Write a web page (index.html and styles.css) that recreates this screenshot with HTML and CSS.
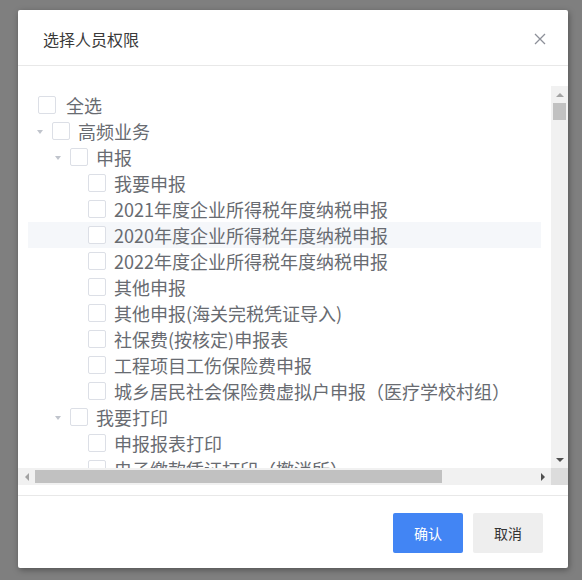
FILE: index.html
```html
<!DOCTYPE html>
<html lang="zh-CN">
<head>
<meta charset="utf-8">
<title>选择人员权限</title>
<link rel="stylesheet" href="styles.css">
</head>
<body class="page">
<div class="modal">
  <div class="modal-header">
    <span class="title">选择人员权限</span>
    <svg class="close" width="12" height="12" viewBox="0 0 12 12"><path d="M1 1 L11 11 M11 1 L1 11" stroke="#8d9099" stroke-width="1.3" fill="none"/></svg>
  </div>
  <div class="modal-body">
    <div class="scroller">
      <div class="viewport">
        <div class="check-all"><span class="cb"></span><span class="label">全选</span></div>
        <div class="tree">
          <div class="node l1"><span class="caret"><i></i></span><span class="cb"></span><span class="label">高频业务</span></div>
          <div class="node l2"><span class="caret"><i></i></span><span class="cb"></span><span class="label">申报</span></div>
          <div class="node l3"><span class="caret"></span><span class="cb"></span><span class="label">我要申报</span></div>
          <div class="node l3"><span class="caret"></span><span class="cb"></span><span class="label">2021年度企业所得税年度纳税申报</span></div>
          <div class="node l3 hover"><span class="caret"></span><span class="cb"></span><span class="label">2020年度企业所得税年度纳税申报</span></div>
          <div class="node l3"><span class="caret"></span><span class="cb"></span><span class="label">2022年度企业所得税年度纳税申报</span></div>
          <div class="node l3"><span class="caret"></span><span class="cb"></span><span class="label">其他申报</span></div>
          <div class="node l3"><span class="caret"></span><span class="cb"></span><span class="label">其他申报(海关完税凭证导入)</span></div>
          <div class="node l3"><span class="caret"></span><span class="cb"></span><span class="label">社保费(按核定)申报表</span></div>
          <div class="node l3"><span class="caret"></span><span class="cb"></span><span class="label">工程项目工伤保险费申报</span></div>
          <div class="node l3"><span class="caret"></span><span class="cb"></span><span class="label">城乡居民社会保险费虚拟户申报（医疗学校村组）</span></div>
          <div class="node l2"><span class="caret"><i></i></span><span class="cb"></span><span class="label">我要打印</span></div>
          <div class="node l3"><span class="caret"></span><span class="cb"></span><span class="label">申报报表打印</span></div>
          <div class="node l3"><span class="caret"></span><span class="cb"></span><span class="label">电子缴款凭证打印（撤消所）</span></div>
        </div>
      </div>
      <div class="vbar">
        <span class="sb-btn"><i class="tri up"></i></span>
        <div class="vtrack"><div class="vthumb"></div></div>
        <span class="sb-btn"><i class="tri down"></i></span>
      </div>
      <div class="hbar">
        <span class="sb-btn"><i class="tri left"></i></span>
        <div class="htrack"><div class="hthumb"></div></div>
        <span class="sb-btn"><i class="tri right"></i></span>
      </div>
      <div class="corner"></div>
    </div>
  </div>
  <div class="modal-footer">
    <button class="btn primary">确认</button>
    <button class="btn">取消</button>
  </div>
</div>
</body>
</html>
```
FILE: styles.css
```css
* { box-sizing: border-box; }
html, body { margin: 0; padding: 0; }
.page {
  background: #7f7f7f;
  width: 582px;
  height: 580px;
  overflow: hidden;
  font-family: "Noto Sans CJK SC", "Noto Sans", sans-serif;
  padding: 10px 0 0 18px;
}
.modal {
  width: 550px;
  height: 558px;
  background: #fff;
  border-radius: 2px;
  box-shadow: 1px 2px 6px rgba(0,0,0,0.35);
  display: flex;
  flex-direction: column;
}
.modal-header {
  height: 56px;
  border-bottom: 1px solid #e8e8e8;
  display: flex;
  align-items: center;
  justify-content: space-between;
  padding: 2px 22px 0 25px;
}
.title {
  font-size: 16px;
  color: #3a3a3a;
  line-height: 20px;
}
.close { display: block; }
.modal-body {
  padding: 20px 0 10px;
  border-bottom: 1px solid #e8e8e8;
}
.scroller {
  display: grid;
  grid-template-columns: 533px 17px;
  grid-template-rows: 382px 17px;
}
.viewport {
  overflow: hidden;
  padding: 6px 10px 0;
}
.check-all, .node {
  height: 26px;
  display: flex;
  align-items: center;
  white-space: nowrap;
  font-size: 18px;
  color: #686b71;
}
.check-all { padding-left: 10px; }
.check-all .cb { margin-right: 10px; }
.node .cb { margin-right: 8px; }
.cb {
  flex: none;
  width: 18px;
  height: 18px;
  border: 1px solid #dcdfe6;
  border-radius: 2px;
  background: #fff;
}
.label { line-height: 26px; }
.node.l1 { padding-left: 0; }
.node.l2 { padding-left: 18px; }
.node.l3 { padding-left: 36px; }
.node.hover { background: #f5f7fa; }
.caret {
  flex: none;
  width: 24px;
  height: 26px;
  display: flex;
  align-items: center;
  justify-content: center;
}
.caret i {
  width: 0;
  height: 0;
  border-left: 3.5px solid transparent;
  border-right: 3.5px solid transparent;
  border-top: 4px solid #c0c4cc;
  margin-top: 1px;
}
.vbar {
  background: #f1f1f1;
  display: flex;
  flex-direction: column;
}
.hbar {
  background: #f1f1f1;
  display: flex;
}
.corner { background: #dcdcdc; }
.sb-btn {
  flex: none;
  width: 17px;
  height: 17px;
  display: flex;
  align-items: center;
  justify-content: center;
}
.vtrack { flex: 1; }
.vthumb {
  width: 13px;
  height: 17px;
  margin: 0 2px;
  background: #c1c1c1;
}
.htrack { flex: 1; }
.hthumb {
  width: 407px;
  height: 13px;
  margin: 2px 0;
  background: #c1c1c1;
}
.tri { width: 0; height: 0; display: block; }
.tri.up { border-left: 4px solid transparent; border-right: 4px solid transparent; border-bottom: 4px solid #a3a3a3; }
.tri.down { border-left: 4px solid transparent; border-right: 4px solid transparent; border-top: 4px solid #505050; }
.tri.left { border-top: 4px solid transparent; border-bottom: 4px solid transparent; border-right: 4px solid #a3a3a3; }
.tri.right { border-top: 4px solid transparent; border-bottom: 4px solid transparent; border-left: 4px solid #505050; }
.modal-footer {
  flex: 1;
  display: flex;
  justify-content: flex-end;
  align-items: flex-start;
  gap: 10px;
  padding: 17px 25px 0;
}
.btn {
  width: 70px;
  height: 40px;
  border: none;
  border-radius: 2px;
  font-family: "Noto Sans CJK SC", "Noto Sans", sans-serif;
  font-size: 14px;
  background: #eeeeee;
  color: #333;
  padding: 0;
}
.btn.primary {
  background: #4285f4;
  color: #fff;
}
```
